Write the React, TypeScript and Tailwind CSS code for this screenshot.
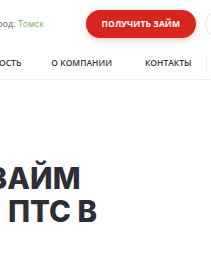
import React from "react";

export default function App() {
  return (
    <div className="w-[211px] h-[255px] overflow-hidden bg-white font-['Open_Sans',sans-serif]">
      <div className="flex items-center h-[48px]">
        <div className="-ml-[13px] text-[9px] text-[#666] whitespace-nowrap">
          Город: <span className="text-[#7cab5a]">Томск</span>
        </div>
        <button className="ml-[42px] shrink-0 w-[110px] h-[28px] rounded-full bg-[#d7261e] text-white text-[8.5px] font-bold tracking-[0.1px] shadow-[0_2px_6px_rgba(215,38,30,0.25)]">
          ПОЛУЧИТЬ ЗАЙМ
        </button>
        <div className="ml-[9px] shrink-0 w-[28px] h-[28px] rounded-full border border-[#e4e4e4]" />
      </div>
      <nav className="flex items-center h-[32px] border-b border-[#efefef] text-[8.5px] font-semibold text-[#3a3a3a] whitespace-nowrap">
        <span className="-ml-[1px]">ОСТЬ</span>
        <span className="ml-[30px]">О КОМПАНИИ</span>
        <span className="ml-[33px]">КОНТАКТЫ</span>
        <span className="ml-auto mr-[4px] w-px h-[20px] bg-[#f0f0f0]" />
      </nav>
      <h1 className="mt-[82px] text-[29.5px] leading-[33px] font-extrabold text-[#2e2e36] font-['Inter',sans-serif] whitespace-nowrap">
        <div className="-ml-[12px]">ЗАЙМ</div>
        <div className="ml-[8px]">ПТС В</div>
      </h1>
    </div>
  );
}
